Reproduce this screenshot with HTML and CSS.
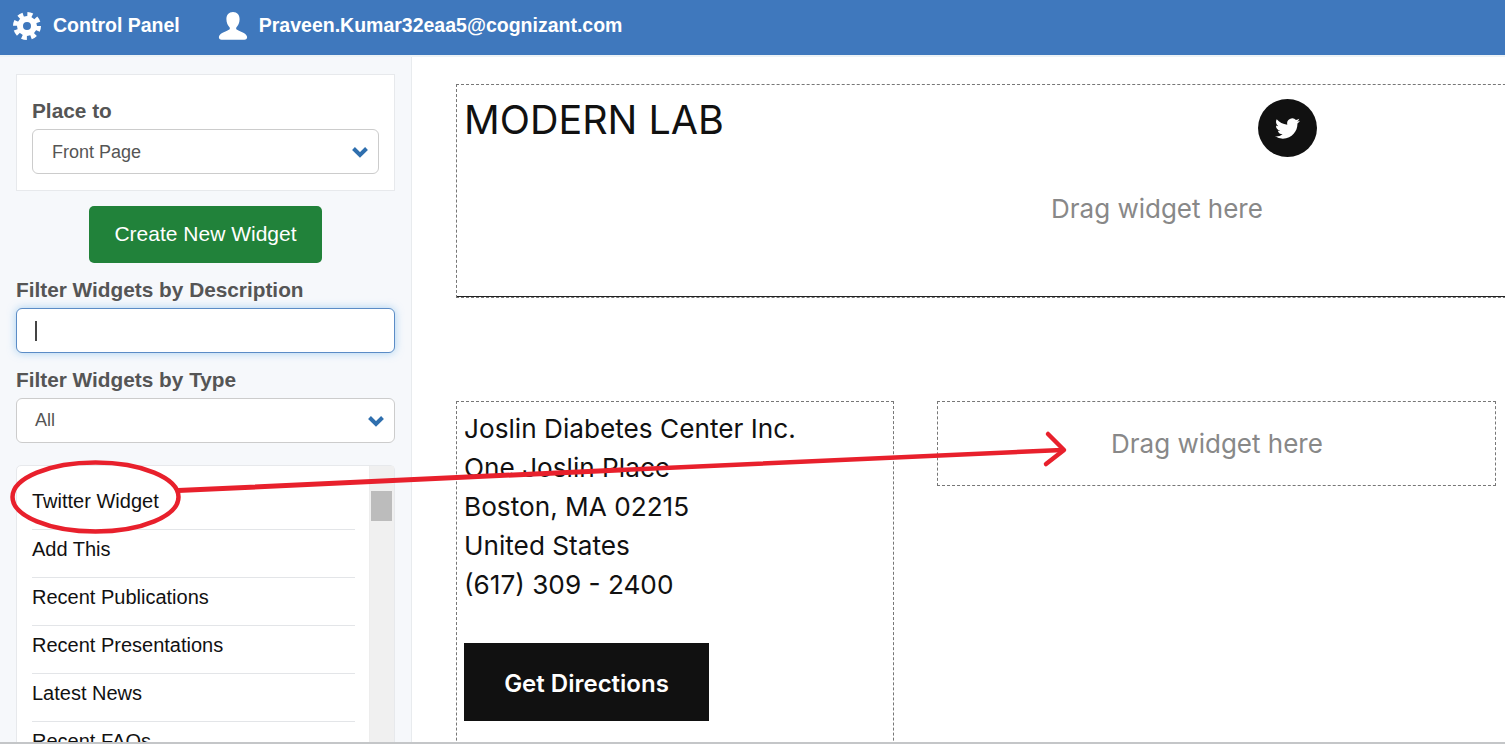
FILE: index.html
```html
<!DOCTYPE html>
<html lang="en">
<head>
<meta charset="utf-8">
<title>Control Panel</title>
<link rel="stylesheet" href="styles.css">
</head>
<body>
<header class="topbar">
  <svg class="gear" viewBox="0 0 28 28" aria-hidden="true">
    <circle class="gear-teeth" cx="14" cy="14" r="11.2"></circle>
    <circle class="gear-ring" cx="14" cy="14" r="7"></circle>
  </svg>
  <span class="topbar-label">Control Panel</span>
  <svg class="user" viewBox="0 0 30 28" aria-hidden="true">
    <path d="M15 0c4.200 0 6.600 3 6.600 7.200 0 3.400-1.500 6.300-3.100 8-.5.600-.5 1.700.1 2.300 2 1.700 9.600 3 10.400 7.100.2 1 .1 1.700-.5 2.400-.6.500-1.200.7-2.100.7H3.600c-.9 0-1.500-.2-2.100-.7-.6-.7-.7-1.400-.5-2.400.8-4.100 8.400-5.400 10.400-7.100.6-.6.600-1.700.1-2.300-1.600-1.700-3.100-4.600-3.100-8C8.400 3 10.800 0 15 0z"></path>
  </svg>
  <span class="topbar-label">Praveen.Kumar32eaa5@cognizant.com</span>
</header>
<div class="workspace">
  <aside class="sidebar">
    <section class="place-card">
      <div class="field-label">Place to</div>
      <div class="select select-place">
        <span>Front Page</span>
        <svg class="chevron" viewBox="0 0 18 12" aria-hidden="true"><path d="M2.500 2.500 9 9l6.500-6.500"></path></svg>
      </div>
    </section>
    <div class="create-row"><button class="create-btn">Create New Widget</button></div>
    <div class="field-label filter-label">Filter Widgets by Description</div>
    <div class="text-input"><span class="caret"></span></div>
    <div class="field-label filter-label type-label">Filter Widgets by Type</div>
    <div class="select select-type">
      <span>All</span>
      <svg class="chevron" viewBox="0 0 18 12" aria-hidden="true"><path d="M2.500 2.500 9 9l6.500-6.500"></path></svg>
    </div>
    <div class="widget-panel">
      <ul class="widget-list">
        <li>Twitter Widget</li>
        <li>Add This</li>
        <li>Recent Publications</li>
        <li>Recent Presentations</li>
        <li>Latest News</li>
        <li>Recent FAQs</li>
      </ul>
      <div class="scrollbar"><div class="scroll-thumb"></div></div>
    </div>
  </aside>
  <main class="canvas">
    <section class="zone zone-head">
      <div class="head-row">
        <h1 class="site-title">MODERN LAB</h1>
        <span class="tw-badge">
          <svg viewBox="0 0 24 24" aria-hidden="true"><path d="M23.953 4.570a10 10 0 01-2.825.775 4.958 4.958 0 002.163-2.723c-.951.555-2.005.959-3.127 1.184a4.920 4.920 0 00-8.384 4.482C7.690 8.095 4.067 6.130 1.640 3.162a4.822 4.822 0 00-.666 2.475c0 1.710.870 3.213 2.188 4.096a4.904 4.904 0 01-2.228-.616v.060a4.923 4.923 0 003.946 4.827 4.996 4.996 0 01-2.212.085 4.936 4.936 0 004.604 3.417 9.867 9.867 0 01-6.102 2.105c-.390 0-.779-.023-1.170-.067a13.995 13.995 0 007.557 2.209c9.053 0 13.998-7.496 13.998-13.985 0-.210 0-.420-.015-.630A9.935 9.935 0 0024 4.590z"></path></svg>
        </span>
      </div>
      <div class="drag-text head-drag">Drag widget here</div>
    </section>
    <div class="columns">
      <section class="zone zone-address">
        <p class="address">Joslin Diabetes Center Inc.<br>One Joslin Place<br>Boston, MA 02215<br>United States<br>(617) 309 - 2400</p>
        <div class="directions">Get Directions</div>
      </section>
      <section class="zone zone-drop">
        <div class="drag-text">Drag widget here</div>
      </section>
    </div>
  </main>
</div>
<div class="page-edge"></div>
<svg class="annotation" viewBox="0 0 1505 744" aria-hidden="true">
  <ellipse cx="95.500" cy="497" rx="83" ry="34.500"></ellipse>
  <path class="thick" d="M178 490.500 620 470"></path>
  <path d="M620 470 1062 450"></path>
  <path d="M1048 434 1064 450 1046 464"></path>
</svg>
</body>
</html>
```
FILE: styles.css
```css
* { box-sizing: border-box; }
html, body { margin: 0; height: 744px; overflow: hidden; background: #fff; }
body { font-family: "Liberation Sans", Arial, sans-serif; position: relative; }

.topbar {
  height: 55px;
  background: #3f78bd;
  display: flex;
  align-items: center;
  padding: 0 0 4px 13px;
  color: #fff;
}
.gear { width: 28px; height: 28px; margin-right: 12px; }
.gear-teeth { fill: none; stroke: #fff; stroke-width: 5.600; stroke-dasharray: 4.800 4; }
.gear-ring { fill: none; stroke: #fff; stroke-width: 6; }
.user { width: 30px; height: 28px; margin: 0 11px 0 38px; fill: #fff; }
.topbar-label { font-size: 19.500px; font-weight: 700; }

.workspace { display: flex; height: 689px; overflow: hidden; border-top: 2px solid #edf3f6; }
.sidebar {
  width: 412px;
  flex: none;
  background: #f6f8fb;
  border-right: 1px solid #e8ebee;
  padding: 17px 16px 0;
}
.place-card {
  background: #fff;
  border: 1px solid #e7e9ec;
  height: 117px;
  padding: 24px 15px 0;
}
.field-label { font-size: 20.800px; font-weight: 700; color: #555; line-height: 24px; margin-bottom: 6px; }
.select {
  height: 45px;
  background: #fff;
  border: 1px solid #ccc;
  border-radius: 6px;
  display: flex;
  align-items: center;
  justify-content: space-between;
  font-size: 18px;
  color: #555;
  padding: 0 9px 0 18px;
}
.select-place { padding-left: 19px; padding-top: 1px; }
.chevron { width: 18px; height: 12px; fill: none; stroke: #2f6fae; stroke-width: 4; }
.create-row { display: flex; justify-content: center; margin: 15px 0 0; }
.create-btn {
  width: 233px;
  height: 57px;
  background: #21823a;
  border: 0;
  border-radius: 5px;
  color: #fff;
  padding: 0 0 2px;
  font: 400 21px "Liberation Sans", Arial, sans-serif;
}
.filter-label { margin: 15px 0 6px; }
.text-input {
  height: 45px;
  background: #fff;
  border: 1px solid #5b8cc6;
  border-radius: 6px;
  box-shadow: 0 0 8px rgba(102, 175, 233, .55);
  display: flex;
  align-items: center;
  padding-left: 18px;
}
.caret { width: 2px; height: 20px; background: #444; }
.type-label { margin-top: 15px; margin-bottom: 6px; }
.widget-panel {
  margin-top: 22px;
  background: #fff;
  border: 1px solid #e7e9ec;
  border-radius: 5px 5px 0 0;
  height: 290px;
  display: flex;
  justify-content: space-between;
}
.widget-list { list-style: none; margin: 0; padding: 16px 0 0 15px; width: 338px; font-size: 20px; color: #111; }
.widget-list li { height: 48px; line-height: 38px; border-bottom: 1px solid #e3e5e8; }
.scrollbar { width: 25px; background: #f0f0f0; padding: 25px 2px 0 1px; border-left: 1px solid #ededed; }
.scroll-thumb { height: 30px; background: #bcbcbc; }

.canvas { flex: 1; min-width: 0; padding: 27px 0 0 44px; overflow: hidden; font-family: "Inter", sans-serif; }
.zone { border: 1px dashed #777; }
.zone-head {
  width: 1100px;
  height: 214px;
  border-right: 0;
  box-shadow: inset 0 -1px 0 #222;
  padding: 0 0 0 7px;
}
.head-row { display: flex; justify-content: space-between; padding: 14px 239px 0 0; height: 107px; align-items: flex-start; }
.site-title { margin: 0; font-size: 39.500px; font-weight: 400; color: #111; line-height: 42px; }
.tw-badge { width: 59px; height: 58px; border-radius: 50%; background: #111; display: flex; align-items: center; justify-content: center; }
.tw-badge svg { width: 25px; height: 25px; fill: #fff; }
.drag-text { font-size: 26px; color: #888; line-height: 34px; }
.head-drag { padding-left: 587px; }
.columns { display: flex; gap: 43px; margin-top: 103px; }
.zone-address { width: 438px; height: 420px; padding: 7px 7px 0; }
.address { margin: 0; font-size: 26.200px; line-height: 39px; color: #111; }
.directions {
  width: 245px;
  height: 78px;
  margin-top: 39px;
  padding-top: 2px;
  background: #111;
  color: #fff;
  font-size: 24px;
  font-weight: 600;
  display: flex;
  align-items: center;
  justify-content: center;
}
.zone-drop { width: 559px; height: 85px; padding: 25px 0 0 173px; }

.page-edge { position: absolute; left: 0; right: 0; bottom: 0; height: 2px; background: #c4c6c8; }
.annotation { position: absolute; inset: 0; width: 1505px; height: 744px; fill: none; stroke: #e8202c; stroke-width: 4.500; stroke-linecap: round; stroke-linejoin: round; pointer-events: none; }
.annotation .thick { stroke-width: 5; }
```
